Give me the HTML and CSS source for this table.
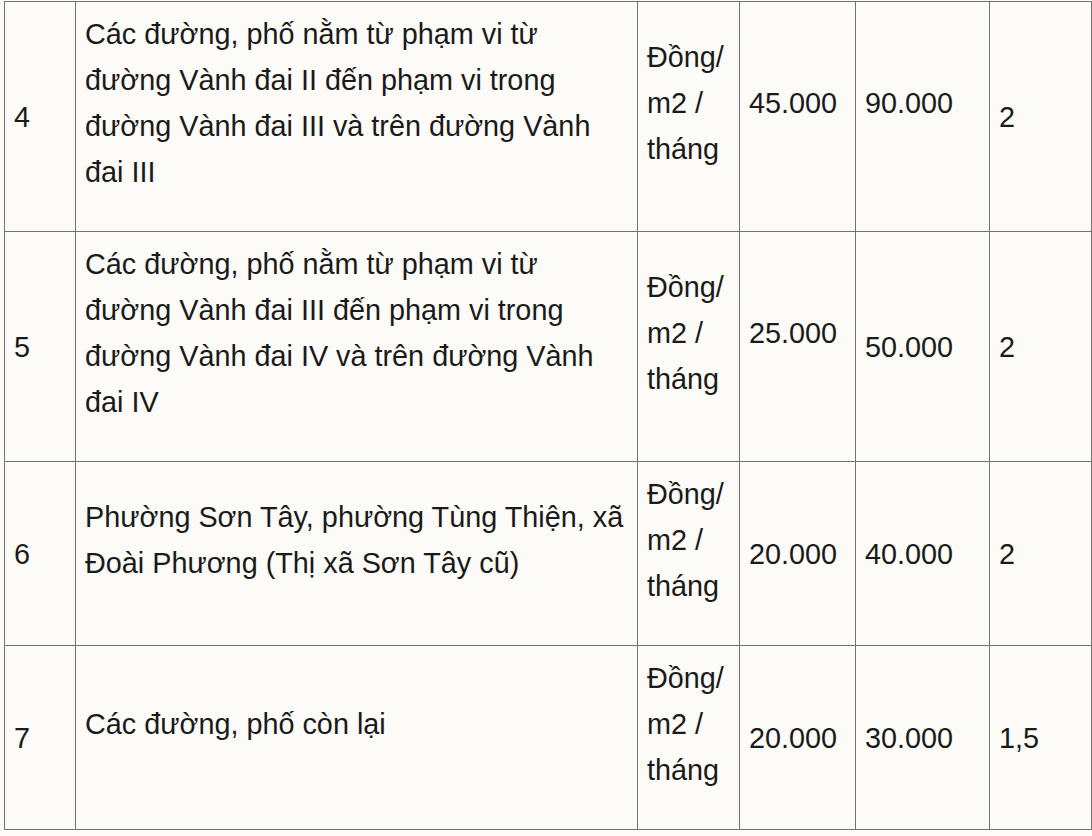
FILE: index.html
```html
<!DOCTYPE html>
<html lang="vi">
<head>
<meta charset="utf-8">
<title>Bảng giá</title>
<link rel="stylesheet" href="styles.css">
</head>
<body>
<table class="price-table">
  <colgroup>
    <col class="c-no">
    <col class="c-area">
    <col class="c-unit">
    <col class="c-min">
    <col class="c-max">
    <col class="c-coef">
  </colgroup>
  <tbody>
    <tr class="row-tall">
      <td>4</td>
      <td><p>Các đường, phố nằm từ phạm vi từ đường Vành đai II đến phạm vi trong đường Vành đai III và trên đường Vành đai III</p></td>
      <td><p>Đồng/ m2 / tháng</p></td>
      <td><p>45.000</p></td>
      <td><p>90.000</p></td>
      <td>2</td>
    </tr>
    <tr class="row-tall">
      <td>5</td>
      <td><p>Các đường, phố nằm từ phạm vi từ đường Vành đai III đến phạm vi trong đường Vành đai IV và trên đường Vành đai IV</p></td>
      <td><p>Đồng/ m2 / tháng</p></td>
      <td><p>25.000</p></td>
      <td>50.000</td>
      <td>2</td>
    </tr>
    <tr class="row-short">
      <td>6</td>
      <td><p>Phường Sơn Tây, phường Tùng Thiện, xã Đoài Phương (Thị xã Sơn Tây cũ)</p></td>
      <td><p>Đồng/ m2 / tháng</p></td>
      <td>20.000</td>
      <td>40.000</td>
      <td>2</td>
    </tr>
    <tr class="row-short">
      <td>7</td>
      <td><p>Các đường, phố còn lại</p></td>
      <td><p>Đồng/ m2 / tháng</p></td>
      <td>20.000</td>
      <td>30.000</td>
      <td>1,5</td>
    </tr>
  </tbody>
</table>
</body>
</html>
```

FILE: styles.css
```css
html, body {
  margin: 0;
  padding: 0;
  background: #fcfbf8;
}

body {
  padding: 1px 0 0 4px;
  font-family: "Liberation Sans", Arial, sans-serif;
  font-size: 28.8px;
  line-height: 46px;
  color: #1a1a1a;
}

.price-table {
  border-collapse: collapse;
  table-layout: fixed;
  width: 1087px;
}

.c-no { width: 71px; }
.c-area { width: 562px; }
.c-unit { width: 102px; }
.c-min { width: 116px; }
.c-max { width: 134px; }
.c-coef { width: 102px; }

.price-table td {
  border: 1px solid #737373;
  padding: 0 9px 0 9px;
  vertical-align: middle;
  text-align: left;
}

.price-table td p {
  margin: 0 0 28px 0;
}

.row-tall td { height: 229px; }
.row-short td { height: 183px; }
```
